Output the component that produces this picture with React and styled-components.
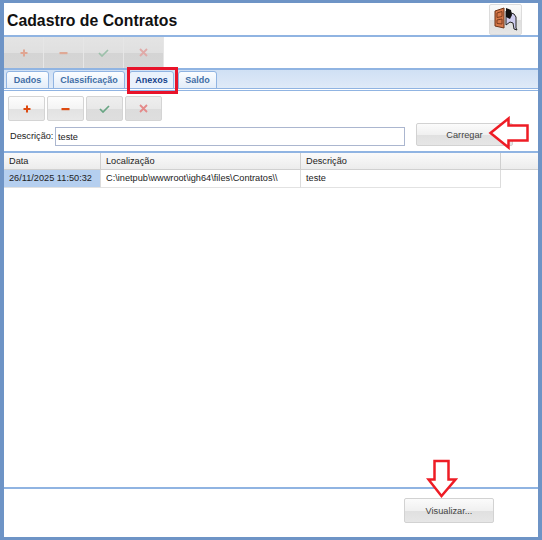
import styled, { createGlobalStyle } from "styled-components";

const GlobalStyle = createGlobalStyle`
  html, body { margin: 0; padding: 0; background: #fff; }
  * { box-sizing: border-box; }
`

const RowData = [
    { data: "26/11/2025 11:50:32", local: "C:\\inetpub\\wwwroot\\igh64\\files\\Contratos\\\\", desc: "teste" },
]

const Plus = ({ color }) => <svg width="8" height="8" viewBox="0 0 8 8"><path d="M3 0.5h2v2.500h2.500v2H5v2.500H3V5H0.500V3H3z" fill={color}/></svg>
const Minus = ({ color }) => <svg width="9" height="8" viewBox="0 0 9 8"><rect x="0.5" y="3" width="8" height="2.200" fill={color}/></svg>
const Check = ({ color }) => <svg width="11" height="8" viewBox="0 0 11 8"><path d="M1 4l3 3L10 1" fill="none" stroke={color} strokeWidth="1.700"/></svg>
const Cross = ({ color }) => <svg width="9" height="9" viewBox="0 0 9 9"><path d="M1 1l7 7M8 1L1 8" fill="none" stroke={color} strokeWidth="1.800"/></svg>

const Door = () => <svg width="26" height="26" viewBox="0 0 26 26">
    <path d="M13 5l8 3 2 3v11l1 2-3-1-1-6-3-1-4 3z" fill="#cfcdf0" stroke="#222" strokeWidth="1"/>
    <path d="M13 2l5 2 1 5-2 4-4-2z" fill="#111"/>
    <path d="M2 5l9-3v20l-9-2z" fill="#d8794a" stroke="#6d3518" strokeWidth="1"/>
    <path d="M4 7l5-1.500v5l-5 1zM4 14l5-1v5l-5-.5z" fill="none" stroke="#7c3c1c" strokeWidth="1"/>
</svg>

const App = () => {
    return <Page>
        <GlobalStyle/>
        <Header>
            <Title>Cadastro de Contratos</Title>
            <ExitButton><Door/></ExitButton>
        </Header>
        <Toolbar>
            <ToolButton><Plus color="#e0a592"/></ToolButton>
            <ToolButton><Minus color="#dfa996"/></ToolButton>
            <ToolButton><Check color="#9cc0aa"/></ToolButton>
            <ToolButton><Cross color="#e0aaa8"/></ToolButton>
        </Toolbar>
        <TabBar>
            <Tab $w={43}>Dados</Tab>
            <Tab $w={72}>Classificação</Tab>
            <Tab $w={45} $active>Anexos</Tab>
            <Tab $w={39}>Saldo</Tab>
        </TabBar>
        <TabBody>
            <SmallToolbar>
                <SmallButton><Plus color="#dd4a10"/></SmallButton>
                <SmallButton><Minus color="#dd4a10"/></SmallButton>
                <SmallButton $muted><Check color="#68a583"/></SmallButton>
                <SmallButton $muted><Cross color="#e48a8a"/></SmallButton>
            </SmallToolbar>
            <DescRow>
                <DescLabel>Descrição:</DescLabel>
                <DescInput readOnly value="teste"/>
                <LoadButton>Carregar</LoadButton>
            </DescRow>
            <Grid>
                <HeadRow>
                    <HeadCell $w={97}>Data</HeadCell>
                    <HeadCell $w={200}>Localização</HeadCell>
                    <HeadCell $w={200}>Descrição</HeadCell>
                    <HeadCell $w={37}/>
                </HeadRow>
                {RowData.map(r => <DataRow key={r.data}>
                    <DataCell $w={97} $selected>{r.data}</DataCell>
                    <DataCell $w={200}>{r.local}</DataCell>
                    <DataCell $w={200}>{r.desc}</DataCell>
                </DataRow>)}
            </Grid>
        </TabBody>
        <Footer>
            <ViewButton>Visualizar...</ViewButton>
        </Footer>
        <Highlight/>
        <RightArrow viewBox="0 0 42 34" width="42" height="34">
            <path d="M2.500 17L20.500 2.500v7h19v15h-19v7z" fill="#fff" stroke="#ee1c25" strokeWidth="2.500"/>
        </RightArrow>
        <DownArrow viewBox="0 0 32 40" width="32" height="40">
            <path d="M8.500 2h14v18.500h7L15.500 37 2.500 20.500h6z" fill="#fff" stroke="#ee1c25" strokeWidth="2.500"/>
        </DownArrow>
    </Page>
}

const Page = styled.div`
  position: relative;
  width: 542px;
  height: 540px;
  display: flex;
  flex-direction: column;
  border-style: solid;
  border-color: #6e94c6;
  border-width: 3px 4px 3px 4px;
  background: #fff;
  font-family: "Liberation Sans", sans-serif;
  font-size: 9.200px;
  color: #222;
  overflow: hidden;
`

const Header = styled.div`
  height: 34px;
  flex: none;
  display: flex;
  justify-content: space-between;
  align-items: center;
  padding: 0 16px 0 3px;
  border-bottom: 2px solid #90b4e2;
`

const Title = styled.h1`
  margin: 0;
  padding-top: 4px;
  font-size: 15.800px;
  font-weight: bold;
  color: #111;
`

const ExitButton = styled.div`
  width: 33px;
  height: 31px;
  display: flex;
  align-items: center;
  justify-content: center;
  border: 1px solid #dcdcdc;
  border-radius: 2px;
  background: linear-gradient(#fafafa 0%, #f0f0f0 50%, #dedede 51%, #e6e6e6 100%);
`

const Toolbar = styled.div`
  height: 31px;
  flex: none;
  display: flex;
`

const ToolButton = styled.div`
  width: 40px;
  height: 31px;
  display: flex;
  align-items: center;
  justify-content: center;
  border-right: 1px solid #e6e6e6;
  background: linear-gradient(#e4e4e4 0%, #e0e0e0 50%, #d4d4d4 51%, #d6d6d6 100%);
`

const TabBar = styled.div`
  height: 21px;
  flex: none;
  display: flex;
  align-items: flex-end;
  gap: 4px;
  padding-left: 2px;
  border-top: 2px solid #90b4e2;
  border-bottom: 1px solid #90b4e2;
  background: linear-gradient(#d0e0f4, #dfeaf8);
`

const Tab = styled.div`
  width: ${p => p.$w}px;
  height: 18px;
  margin-bottom: -1px;
  display: flex;
  align-items: center;
  justify-content: center;
  font-size: 9px;
  font-weight: bold;
  color: ${p => p.$active ? "#15428b" : "#3f6ea6"};
  background: ${p => p.$active ? "#eaf2fc" : "linear-gradient(#fbfdff, #e3edf9)"};
  border: 1px solid #90b4e2;
  border-radius: 3px 3px 0 0;
`

const TabBody = styled.div`
  flex: 1;
  display: flex;
  flex-direction: column;
  border-top: 1px solid #90b4e2;
  margin-top: 1px;
`

const SmallToolbar = styled.div`
  display: flex;
  gap: 2px;
  padding: 5px 0 0 4px;
`

const SmallButton = styled.div`
  width: 37px;
  height: 25px;
  display: flex;
  align-items: center;
  justify-content: center;
  border: 1px solid #d4d4d4;
  border-radius: 2px;
  background: ${p => p.$muted
    ? "linear-gradient(#eeeeee 0%, #e8e8e8 50%, #dcdcdc 51%, #dedede 100%)"
    : "linear-gradient(#fdfdfd 0%, #f4f4f4 50%, #e2e2e2 51%, #e8e8e8 100%)"};
`

const DescRow = styled.div`
  height: 24px;
  margin-top: 1px;
  display: flex;
  align-items: flex-end;
  padding-left: 6px;
`

const DescLabel = styled.label`
  width: 45px;
  height: 19px;
  line-height: 19px;
`

const DescInput = styled.input`
  width: 350px;
  height: 19px;
  padding: 0 2px;
  border: 1px solid #abb6cf;
  outline: none;
  font-family: "Liberation Sans", sans-serif;
  font-size: 9.200px;
  color: #222;
`

const ActionButton = styled.div`
  display: flex;
  align-items: center;
  justify-content: center;
  border: 1px solid #d2d2d2;
  border-radius: 2px;
  color: #444;
  background: linear-gradient(#fbfbfb 0%, #f0f0f0 50%, #e0e0e0 51%, #e6e6e6 100%);
`

const LoadButton = styled(ActionButton)`
  width: 97px;
  height: 23px;
  margin-left: 11px;
`

const Grid = styled.div`
  margin-top: 5px;
  border-top: 2px solid #90b4e2;
`

const HeadRow = styled.div`
  display: flex;
  height: 17px;
  border-bottom: 1px solid #d0d0d0;
  background: linear-gradient(#fafafa, #ececec);
`

const HeadCell = styled.div`
  width: ${p => p.$w}px;
  padding-left: 5px;
  line-height: 16px;
  border-right: 1px solid #cfcfcf;
  &:last-child { border-right: none; }
`

const DataRow = styled.div`
  display: flex;
  height: 18px;
`

const DataCell = styled.div`
  width: ${p => p.$w}px;
  padding-left: 5px;
  line-height: 17px;
  white-space: nowrap;
  border-right: 1px solid #dcdcdc;
  border-bottom: 1px solid #e2e2e2;
  background: ${p => p.$selected ? "#b5cfef" : "#fff"};
`

const Footer = styled.div`
  height: 50px;
  flex: none;
  display: flex;
  justify-content: flex-end;
  padding: 9px 44px 0 0;
  border-top: 2px solid #90b4e2;
`

const ViewButton = styled(ActionButton)`
  width: 90px;
  height: 25px;
`

const Highlight = styled.div`
  position: absolute;
  left: 123px;
  top: 64px;
  width: 51px;
  height: 27px;
  border: 3px solid #e8132a;
`

const RightArrow = styled.svg`
  position: absolute;
  left: 484px;
  top: 113px;
`

const DownArrow = styled.svg`
  position: absolute;
  left: 422px;
  top: 456px;
`

export default App;
